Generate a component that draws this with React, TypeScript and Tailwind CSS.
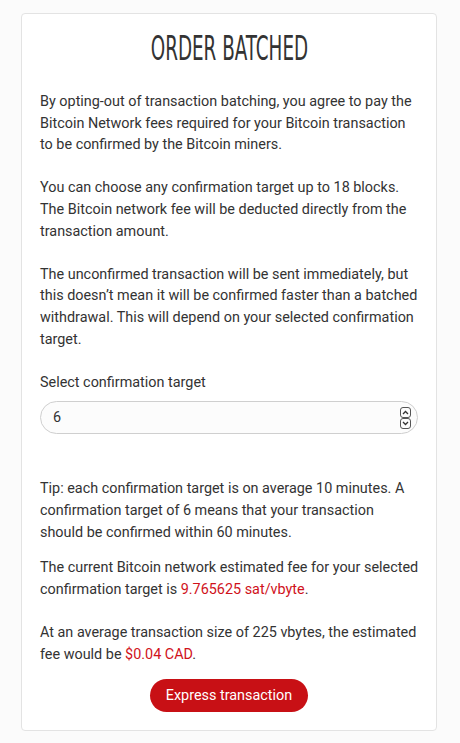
import React from "react";

export default function App() {
  return (
    <div className="min-h-[743px] bg-[#fbfbfb] pt-[13px] px-[21px] pb-[12px]" style={{ fontFamily: "Roboto, 'Liberation Sans', sans-serif" }}>
      <div className="w-[416px] bg-white border border-[#e3e3e3] rounded-[4px] pl-[18px] pr-[16px] pt-[16px] pb-[18px] text-[14.4px] leading-[21.6px] text-[#333]">
        <h1 className="text-center text-[34px] leading-[36px] text-[#333] mb-[25px] pr-[2px]" style={{ fontFamily: "'Liberation Sans Narrow', 'DejaVu Sans Condensed', sans-serif", transform: "scaleX(0.6)" }}>
          ORDER BATCHED
        </h1>
        <p className="mb-[21.6px] pr-[2px]">
          By opting-out of transaction batching, you agree to pay the Bitcoin Network fees required for your Bitcoin transaction to be confirmed by the Bitcoin miners.
        </p>
        <p className="mb-[21.6px] pr-[2px]">
          You can choose any confirmation target up to 18 blocks. The Bitcoin network fee will be deducted directly from the transaction amount.
        </p>
        <p className="mb-[21.6px] pr-[2px]">
          The unconfirmed transaction will be sent immediately, but this doesn’t mean it will be confirmed faster than a batched withdrawal. This will depend on your selected confirmation target.
        </p>
        <label className="block mb-[8px]">Select confirmation target</label>
        <div className="h-[33px] mr-[2px] rounded-full border border-[#cfcfcf] bg-[#fcfcfc] flex items-center justify-between pl-[12px] pr-[6px] mb-[44px]">
          <span>6</span>
          <div className="flex flex-col">
            <div className="w-[11px] h-[11px] border border-[#555] rounded-[3px] flex items-center justify-center">
              <svg width="7" height="5" viewBox="0 0 7 5"><path d="M1 4 L3.5 1.5 L6 4" fill="none" stroke="#333" strokeWidth="1.3" /></svg>
            </div>
            <div className="w-[11px] h-[11px] border border-[#555] rounded-[3px] flex items-center justify-center">
              <svg width="7" height="5" viewBox="0 0 7 5"><path d="M1 1 L3.5 3.5 L6 1" fill="none" stroke="#333" strokeWidth="1.3" /></svg>
            </div>
          </div>
        </div>
        <p className="mb-[14px] pr-[2px]">
          Tip: each confirmation target is on average 10 minutes. A confirmation target of 6 means that your transaction should be confirmed within 60 minutes.
        </p>
        <p className="mb-[22px]">
          The current Bitcoin network estimated fee for your selected confirmation target is <span className="text-[#d0121b]">9.765625 sat/vbyte</span>.
        </p>
        <p className="mb-[14px] pr-[2px]">
          At an average transaction size of 225 vbytes, the estimated fee would be <span className="text-[#d0121b]">$0.04 CAD</span>.
        </p>
        <div className="flex justify-center pr-[2px]">
          <button className="h-[33px] px-[15.5px] rounded-full bg-[#c81015] text-white text-[14.4px]">Express transaction</button>
        </div>
      </div>
    </div>
  );
}
